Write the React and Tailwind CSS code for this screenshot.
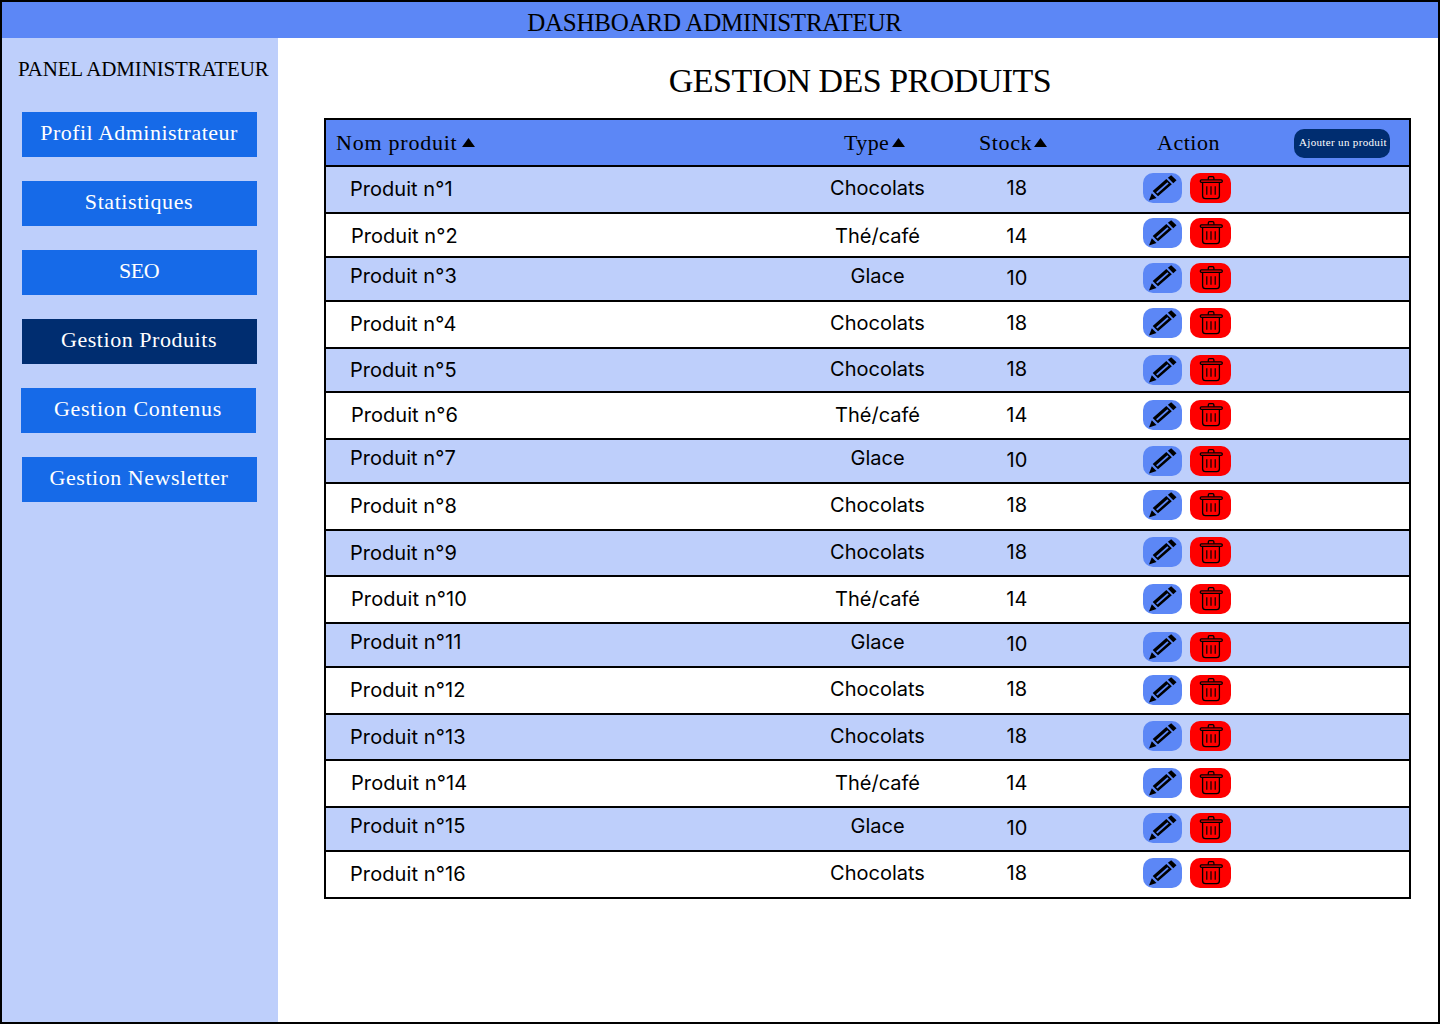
const NAV = [
  { label: 'Profil Administrateur', cls: 'tracking-[0.47px]' },
  { label: 'Statistiques', cls: 'tracking-[0.57px]' },
  { label: 'SEO', cls: 'tracking-[-0.5px]' },
  { label: 'Gestion Produits', cls: 'tracking-[0.55px]', active: true },
  { label: 'Gestion Contenus', cls: 'tracking-[0.68px]', shift: true },
  { label: 'Gestion Newsletter', cls: 'tracking-[0.53px]' },
];

// h: inner row height; name / type / stock: text centre; act: top of the buttons
const ROWS = [
  { type: 'Chocolats', stock: 18, h: 45, name: 22, ty: 21, st: 21, act: 6 },
  { type: 'Thé/café', stock: 14, h: 42, name: 22, ty: 22, st: 22, act: 4 },
  { type: 'Glace', stock: 10, h: 42, name: 18, ty: 18, st: 20, act: 5 },
  { type: 'Chocolats', stock: 18, h: 45, name: 22, ty: 21, st: 21, act: 6 },
  { type: 'Chocolats', stock: 18, h: 42, name: 21, ty: 20, st: 20, act: 6 },
  { type: 'Thé/café', stock: 14, h: 45, name: 22, ty: 22, st: 22, act: 7 },
  { type: 'Glace', stock: 10, h: 42, name: 18, ty: 18, st: 20, act: 6 },
  { type: 'Chocolats', stock: 18, h: 45, name: 22, ty: 21, st: 21, act: 6 },
  { type: 'Chocolats', stock: 18, h: 44, name: 22, ty: 21, st: 21, act: 6 },
  { type: 'Thé/café', stock: 14, h: 45, name: 22, ty: 22, st: 22, act: 7 },
  { type: 'Glace', stock: 10, h: 42, name: 18, ty: 18, st: 20, act: 8 },
  { type: 'Chocolats', stock: 18, h: 45, name: 22, ty: 21, st: 21, act: 7 },
  { type: 'Chocolats', stock: 18, h: 44, name: 22, ty: 21, st: 21, act: 6 },
  { type: 'Thé/café', stock: 14, h: 45, name: 22, ty: 22, st: 22, act: 7 },
  { type: 'Glace', stock: 10, h: 42, name: 18, ty: 18, st: 20, act: 5 },
  { type: 'Chocolats', stock: 18, h: 45, name: 22, ty: 21, st: 21, act: 6 },
];

const COLS = 'grid grid-cols-[452px_199px_80px_86px_1fr]';

function Arrow({ className }) {
  return (
    <svg className={className} width="13" height="9" viewBox="0 0 13 9">
      <path d="M6.5 0 L13 9 H0 Z" />
    </svg>
  );
}

function PencilButton() {
  return (
    <button className="h-[30px] w-[39px] rounded-[10px] bg-[#5c87f6]">
      <svg width="39" height="30" viewBox="0 0 39 30">
        <path d="M6 27.5 L8.8 20.2 L13.5 25.1 Z" />
        <path fillRule="evenodd" d="M9.7 17.9 L23.3 5.9 L28.8 11.2 L15 23.3 Z M13.1 19.3 L14.4 20.6 L25.7 10.6 L24.4 9.3 Z" />
        <path d="M24.9 4.7 L28.2 2.2 L33.5 7.3 L30.3 10.3 Z" />
      </svg>
    </button>
  );
}

function TrashButton() {
  return (
    <button className="h-[30px] w-[41px] rounded-[10px] bg-[#ff0000]">
      <svg width="41" height="30" viewBox="0 0 41 30" fill="none" stroke="#000" strokeWidth="1.3">
        <path d="M18.3 6.7 V5 Q18.3 3.7 19.6 3.7 H22.6 Q23.9 3.7 23.9 5 V6.7" />
        <rect x="10.3" y="6.8" width="22" height="2.5" rx="1.1" />
        <path d="M12.6 9.3 V22.8 Q12.6 25.7 15.5 25.7 H26.5 Q29.4 25.7 29.4 22.8 V9.3" />
        <path d="M16.8 13.2 V21.8 M21 13.2 V21.8 M25.2 13.2 V21.8" strokeWidth="1.15" />
      </svg>
    </button>
  );
}

function Cell({ center, className, children }) {
  return (
    <div className={className} style={{ paddingTop: center - 12 }}>
      {children}
    </div>
  );
}

export default function App() {
  return (
    <div className="flex h-[1024px] w-[1440px] flex-col overflow-hidden border-2 border-black bg-white font-['Liberation_Serif',serif] text-black">
      <header className="flex h-9 shrink-0 justify-center bg-[#5c87f6] pr-[11px] pt-[5px] text-[25px] leading-8 tracking-[-0.22px]">
        DASHBOARD ADMINISTRATEUR
      </header>
      <div className="flex flex-1">
        <aside className="w-[276px] shrink-0 bg-[#becffb]">
          <h2 className="whitespace-nowrap pl-4 pt-[19px] text-[21px] leading-6 tracking-[-0.14px]">PANEL ADMINISTRATEUR</h2>
          <nav className="mt-[31px] flex flex-col gap-6 pl-5">
            {NAV.map((n) => (
              <a
                key={n.label}
                className={`flex h-[45px] w-[235px] justify-center whitespace-nowrap pr-px pt-2 text-[22px] leading-[26px] text-white ${n.cls} ${n.active ? 'bg-[#002d70]' : 'bg-[#166ae8]'} ${n.shift ? '-ml-px' : ''}`}
              >
                {n.label}
              </a>
            ))}
          </nav>
        </aside>
        <main className="flex-1 pl-[46px]">
          <h1 className="w-[1072px] pt-[23px] text-center text-[34px] leading-10 tracking-[-0.53px]">GESTION DES PRODUITS</h1>
          <div className="mt-[17px] w-[1087px] border-2 border-black">
            <div className={`${COLS} h-[45px] bg-[#5c87f6] text-[22px] leading-[26px]`}>
              <div className="flex pl-[10px] pt-[10px] tracking-[0.76px]">
                Nom produit
                <Arrow className="ml-[5px] mt-2" />
              </div>
              <div className="flex pl-[66px] pt-[10px] tracking-[0.4px]">
                Type
                <Arrow className="ml-[3px] mt-2" />
              </div>
              <div className="flex pl-[2px] pt-[10px] tracking-[0.6px]">
                Stock
                <Arrow className="ml-[2px] mt-2" />
              </div>
              <div />
              <div className="flex pl-[14px] pt-[10px] tracking-[0.5px]">
                <span className="w-[137px]">Action</span>
                <button className="-mt-px h-[29px] w-24 whitespace-nowrap rounded-[10px] bg-[#002d70] pl-[2px] pb-[2px] text-[11px] leading-none tracking-[0.34px] text-white">
                  Ajouter un produit
                </button>
              </div>
            </div>
            {ROWS.map((r, i) => (
              <div
                key={i}
                className={`${COLS} box-content border-t-2 border-black font-['Inter',sans-serif] text-[20px] leading-6 ${i % 2 ? 'bg-white' : 'bg-[#becffb]'}`}
                style={{ height: r.h }}
              >
                <Cell center={r.name} className={`${r.stock === 14 ? 'pl-[25px]' : 'pl-6'} ${i < 9 ? 'tracking-[0.04px]' : 'tracking-[0.1px]'}`}>
                  Produit n°{i + 1}
                </Cell>
                <Cell center={r.ty} className="text-center">{r.type}</Cell>
                <Cell center={r.st} className="text-center tracking-[0.2px]">{r.stock}</Cell>
                <div />
                <div className="flex gap-2" style={{ paddingTop: r.act }}>
                  <PencilButton />
                  <TrashButton />
                </div>
              </div>
            ))}
          </div>
        </main>
      </div>
    </div>
  );
}
